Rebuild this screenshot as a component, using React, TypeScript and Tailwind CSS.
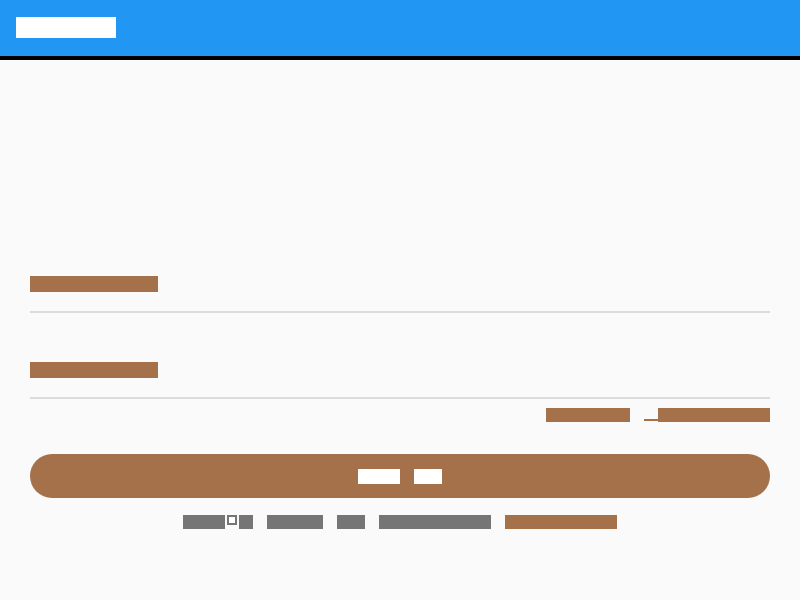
import React from "react";

const B = "#a4714a";
const G = "#757575";

function Blk({ w, h, color, text }: { w: string; h: string; color: "b" | "g" | "w"; text: string }) {
  const cls =
    color === "b"
      ? "bg-[#a4714a] text-[#a4714a]"
      : color === "g"
      ? "bg-[#757575] text-[#757575]"
      : "bg-white text-white";
  return (
    <span
      className={`inline-block overflow-hidden whitespace-nowrap text-[11px] leading-[14px] ${cls} ${w} ${h}`}
      style={{ fontFamily: "Roboto, 'Liberation Sans', sans-serif" }}
    >
      {text}
    </span>
  );
}

export default function App() {
  void B;
  void G;
  return (
    <div className="w-[800px] h-[600px] bg-[#fafafa] overflow-hidden" style={{ fontFamily: "Roboto, 'Liberation Sans', sans-serif" }}>
      <header className="h-[60px] bg-[#2196f3] border-b-4 border-black flex items-center pl-4 pb-[1px]">
        <span className="inline-block w-[100px] h-[21px] bg-white text-white text-[16px] leading-[21px] overflow-hidden whitespace-nowrap">
          Sign in
        </span>
      </header>

      <main className="px-[30px] pt-[216px]">
        <div className="flex flex-col">
          <Blk w="w-[128px]" h="h-[16px]" color="b" text="Email address" />
          <div className="mt-[19px] h-[2px] bg-[#dcdcdc]" />
        </div>
        <div className="flex flex-col mt-[49px]">
          <Blk w="w-[128px]" h="h-[16px]" color="b" text="Password" />
          <div className="mt-[19px] h-[2px] bg-[#dcdcdc]" />
        </div>

        <div className="mt-[9px] flex justify-end items-end h-[14px]">
          <Blk w="w-[84px]" h="h-[14px]" color="b" text="Create account" />
          <span className="ml-[14px] inline-block w-[14px] h-[2px] mb-[1px] bg-[#a4714a]" />
          <Blk w="w-[112px]" h="h-[14px]" color="b" text="Forgot password?" />
        </div>

        <button className="mt-[32px] w-full h-[44px] rounded-full bg-[#a4714a] flex items-center justify-center gap-[14px]">
          <Blk w="w-[42px]" h="h-[15px]" color="w" text="SIGN" />
          <Blk w="w-[28px]" h="h-[15px]" color="w" text="IN" />
        </button>

        <div className="mt-[17px] flex justify-center items-start gap-[14px]">
          <span className="flex items-start">
            <Blk w="w-[42px]" h="h-[14px]" color="g" text="Terms" />
            <span className="ml-[2px] mr-[2px] inline-block w-[10px] h-[10px] border-2 border-[#757575] bg-white" />
            <Blk w="w-[14px]" h="h-[14px]" color="g" text="s" />
          </span>
          <Blk w="w-[56px]" h="h-[14px]" color="g" text="Privacy" />
          <Blk w="w-[28px]" h="h-[14px]" color="g" text="and" />
          <Blk w="w-[112px]" h="h-[14px]" color="g" text="Cookie policy" />
          <Blk w="w-[112px]" h="h-[14px]" color="b" text="Learn more" />
        </div>
      </main>
    </div>
  );
}
